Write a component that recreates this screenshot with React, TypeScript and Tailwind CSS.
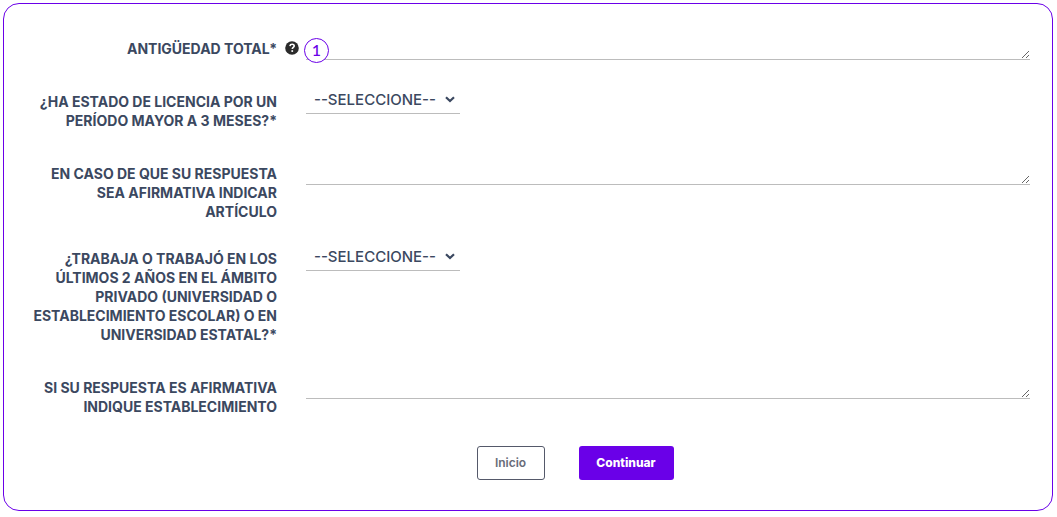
import React, { useState } from 'react';

interface FieldRowProps {
  id: string;
  lines: string[];
  help?: string;
  className?: string;
  children: React.ReactNode;
}

const FieldRow: React.FC<FieldRowProps> = ({ id, lines, help, className = 'mb-[34px]', children }) => (
  <div className={`flex items-start ${className}`}>
    <label htmlFor={id} className="w-[273px] shrink-0 text-right text-sm leading-[19px] font-bold uppercase whitespace-nowrap">
      {lines.map(line => (
        <span key={line} className="block">{line}</span>
      ))}
    </label>
    <div className="w-[29px] shrink-0 flex justify-center pt-[2px]">
      {help && (
        <button type="button" aria-label={help} title={help} className="w-[14px] h-[14px]">
          <svg viewBox="0 0 14 14" className="block w-[14px] h-[14px]">
            <circle cx="7" cy="7" r="6.8" fill="#2b2b2b" />
            <path d="M4.9 5.1c.2-1.2 1-1.8 2.2-1.8 1.3 0 2.1.7 2.1 1.7 0 1.4-1.9 1.5-1.9 3" fill="none" stroke="#fff" strokeWidth="1.6" />
            <rect x="6.4" y="9.2" width="1.7" height="1.7" fill="#fff" />
          </svg>
        </button>
      )}
    </div>
    <div className="relative flex-1 min-w-0">{children}</div>
  </div>
);

const TextField: React.FC<{ id: string }> = ({ id }) => {
  const [value, setValue] = useState('');

  return (
    <textarea
      id={id}
      rows={1}
      value={value}
      onChange={e => setValue(e.target.value)}
      className="block w-full h-[21px] min-h-[21px] px-2 text-sm leading-[19px] bg-transparent border-b border-[#bcbcbc] outline-none resize overflow-hidden"
    />
  );
};

const SelectField: React.FC<{ id: string }> = ({ id }) => (
  <div className="relative w-[154px]">
    <select
      id={id}
      className="block w-full h-[22px] pl-2 pb-[6px] text-[15px] leading-[15px] font-medium appearance-none bg-transparent border-b border-[#bcbcbc] outline-none"
    >
      <option value="">--SELECCIONE--</option>
      <option value="si">SI</option>
      <option value="no">NO</option>
    </select>
    <svg viewBox="0 0 10 7" className="absolute right-[5px] top-1 w-[10px] h-[7px] pointer-events-none">
      <path d="M1 1.2 5 5l4-3.8" fill="none" stroke="currentColor" strokeWidth="2.2" />
    </svg>
  </div>
);

export default function App() {
  return (
    <div className="pt-[3px] pl-[3px] pr-1 bg-white font-['Inter',sans-serif] text-[#3b4860]">
      <form
        onSubmit={e => e.preventDefault()}
        className="pt-[35px] pr-[22px] pb-[30px] border border-[#6a00e8] rounded-2xl"
      >
        <FieldRow id="antiguedad" lines={['Antigüedad total*']} help="Ayuda" className="mb-8">
          <TextField id="antiguedad" />
          {/* Step marker over the start of the field */}
          <span className="absolute -left-[2px] -top-[1px] w-[25px] h-[25px] pb-[2px] flex items-center justify-center rounded-full border border-[#6a00e8] bg-white text-[#6a00e8] text-base leading-none font-medium font-['Lato',sans-serif]">
            1
          </span>
        </FieldRow>

        <FieldRow id="licencia" lines={['¿Ha estado de licencia por un', 'período mayor a 3 meses?*']}>
          <SelectField id="licencia" />
        </FieldRow>

        <FieldRow
          id="articulo"
          lines={['En caso de que su respuesta', 'sea afirmativa indicar', 'artículo']}
          className="mb-7"
        >
          <TextField id="articulo" />
        </FieldRow>

        <FieldRow
          id="privado"
          lines={[
            '¿Trabaja o trabajó en los',
            'últimos 2 años en el ámbito',
            'privado (universidad o',
            'establecimiento escolar) o en',
            'universidad estatal?*',
          ]}
        >
          <SelectField id="privado" />
        </FieldRow>

        <FieldRow
          id="establecimiento"
          lines={['Si su respuesta es afirmativa', 'indique establecimiento']}
          className="mb-[30px]"
        >
          <TextField id="establecimiento" />
        </FieldRow>

        <div className="flex justify-center gap-[34px] pl-[116px] text-xs">
          <button type="button" className="w-[68px] h-[34px] rounded-[3px] border border-[#55596a] font-semibold text-[#686b78]">
            Inicio
          </button>
          <button type="submit" className="w-[95px] h-[34px] rounded-[3px] bg-[#6a00e8] font-extrabold text-white">
            Continuar
          </button>
        </div>
      </form>
    </div>
  );
}
